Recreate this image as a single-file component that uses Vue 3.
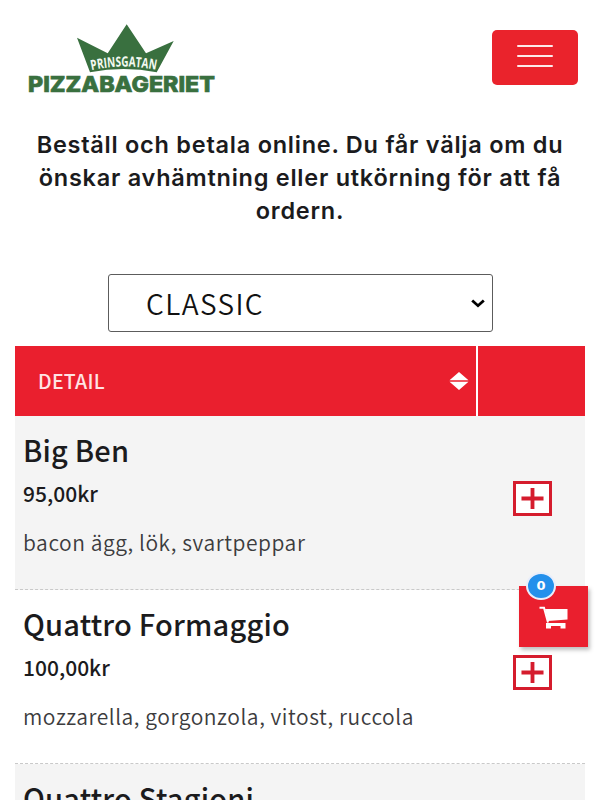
<template>
  <div class="page">
    <header class="header">
      <svg class="logo" viewBox="0 0 200 80" role="img" aria-label="Prinsgatan Pizzabageriet">
        <path
          class="logo-green"
          d="M57 17.7L87.7 33.3L106.7 4.3L126 33.3L153.7 21L136.7 52.3Q104 45.5 70 52.3Z"
        />
        <path id="arc" d="M71.5 50.3Q104 43 136.5 50" fill="none" />
        <text class="logo-street">
          <textPath href="#arc" textLength="65" lengthAdjust="spacingAndGlyphs">PRINSGATAN</textPath>
        </text>
        <text class="logo-name" x="8" y="71.7" textLength="187" lengthAdjust="spacingAndGlyphs">PIZZABAGERIET</text>
      </svg>
      <button class="menu-btn" aria-label="Meny">
        <span class="menu-line"></span>
        <span class="menu-line"></span>
        <span class="menu-line"></span>
      </button>
    </header>

    <h2 class="intro">
      <span class="intro-line">Beställ och betala online. Du får välja om du</span>
      <span class="intro-line">önskar avhämtning eller utkörning för att få</span>
      <span class="intro-line">ordern.</span>
    </h2>

    <button class="category">
      <span>{{ category }}</span>
      <svg class="chevron" viewBox="0 0 14 9">
        <path d="M1.2 1.5L7 6.7L12.8 1.5" fill="none" stroke="#000" stroke-width="2.8" />
      </svg>
    </button>

    <section class="menu">
      <div class="menu-head">
        <div class="head-detail">
          <span class="head-label">DETAIL</span>
          <svg class="sort" viewBox="0 0 20 18">
            <path d="M10 0L19.5 8.2H0.5ZM0.5 9.8H19.5L10 18Z" fill="#fff" />
          </svg>
        </div>
        <div class="head-action"></div>
      </div>

      <article v-for="pizza in pizzas" :key="pizza.name" class="row">
        <div class="row-text">
          <h3 class="name">{{ pizza.name }}</h3>
          <p class="price">{{ pizza.price }}</p>
          <p class="desc">{{ pizza.desc }}</p>
        </div>
        <button class="add-btn" aria-label="Lägg till" @click="count++">
          <svg viewBox="0 0 24 24">
            <path d="M12 1V23M0.5 12H23.5" stroke="#d51c2d" stroke-width="4" />
          </svg>
        </button>
      </article>
    </section>

    <button class="cart" aria-label="Varukorg">
      <span class="badge">{{ count }}</span>
      <svg class="cart-icon" viewBox="0 0 30 24">
        <path d="M0.5 1.8H5L9 16.5" fill="none" stroke="#fff" stroke-width="2" />
        <path d="M6 3H28.5V13.5L8.8 15Z" fill="#fff" />
        <path d="M7 17H26.5V22.5H21.5V20H12V22.5H7Z" fill="#fff" />
      </svg>
    </button>
  </div>
</template>

<script setup>
import { ref } from 'vue'

const category = ref('CLASSIC')
const count = ref(0)

const pizzas = [
  { name: 'Big Ben', price: '95,00kr', desc: 'bacon ägg, lök, svartpeppar' },
  { name: 'Quattro Formaggio', price: '100,00kr', desc: 'mozzarella, gorgonzola, vitost, ruccola' },
  { name: 'Quattro Stagioni', price: '', desc: '' }
]
</script>

<style>
body {
  margin: 0;
  background: #fff;
}
</style>

<style scoped>
.page {
  position: relative;
  width: 600px;
  height: 800px;
  overflow: hidden;
  background: #fff;
  color: #1b1b1d;
  font-family: "Noto Sans CJK JP", "Noto Sans", sans-serif;
}

button {
  border: none;
  padding: 0;
  margin: 0;
  font-family: inherit;
  cursor: pointer;
}

.header {
  display: flex;
  justify-content: space-between;
  align-items: flex-start;
  height: 108px;
  padding: 20px 22px 0 20px;
}

.logo {
  width: 200px;
  height: 80px;
}

.logo-green {
  fill: #39703f;
}

.logo-street {
  fill: #f4faf2;
  font: 700 14px "Open Sans", sans-serif;
}

.logo-name {
  fill: #39703f;
  stroke: #39703f;
  stroke-width: 0.7;
  font: 800 22px Inter, sans-serif;
}

.menu-btn {
  display: flex;
  flex-direction: column;
  align-items: center;
  gap: 8px;
  width: 86px;
  height: 55px;
  margin-top: 10px;
  padding-top: 15px;
  border-radius: 5px;
  background: #ea232c;
}

.menu-line {
  width: 36px;
  height: 2px;
  border-radius: 1px;
  background: #fdeaea;
}

.intro {
  margin: 0;
  height: 146px;
  text-align: center;
  font-family: Inter, sans-serif;
  font-size: 23.5px;
  font-weight: 600;
  line-height: 33px;
}

.intro-line {
  display: block;
  white-space: nowrap;
  letter-spacing: 0.75px;
}

.category {
  display: flex;
  justify-content: space-between;
  align-items: center;
  box-sizing: border-box;
  width: 385px;
  height: 58px;
  margin: 0 0 14px 108px;
  padding: 0 7px 0 37px;
  border: 1px solid #5c5c5c;
  border-radius: 3px;
  background: #fff;
  color: #111;
  font-size: 28px;
  font-weight: 350;
  line-height: 55px;
  letter-spacing: 1.4px;
}

.chevron {
  width: 14px;
  height: 9px;
}

.menu {
  width: 570px;
  margin-left: 15px;
}

.menu-head {
  display: flex;
  gap: 2px;
  height: 70px;
}

.head-detail {
  display: flex;
  justify-content: space-between;
  align-items: center;
  box-sizing: border-box;
  width: 461px;
  padding: 0 7px 0 23px;
  background: #ea1f2e;
  color: #ffe3e4;
  font-size: 19.5px;
  font-weight: 500;
  letter-spacing: 0.25px;
}

.head-label {
  margin-bottom: 1px;
}

.sort {
  width: 20px;
  height: 18px;
}

.head-action {
  flex: 1;
  background: #ea1f2e;
}

.row {
  display: flex;
  justify-content: space-between;
  box-sizing: border-box;
  height: 174px;
  padding: 0 33px 0 8px;
  border-bottom: 1px dashed #c9c9c9;
}

.row:nth-of-type(odd) {
  background: #f4f4f4;
}

.name {
  margin: 12px 0 0;
  font-size: 29px;
  font-weight: 500;
  line-height: 42px;
  letter-spacing: 0.2px;
}

.price {
  margin: 8px 0 0;
  font-size: 21px;
  font-weight: 500;
  line-height: 30px;
}

.desc {
  margin: 20px 0 0;
  color: #3c3c3e;
  font-size: 21px;
  font-weight: 350;
  line-height: 29px;
  letter-spacing: 0.55px;
}

.add-btn {
  display: flex;
  justify-content: center;
  align-items: center;
  box-sizing: border-box;
  width: 39px;
  height: 35px;
  margin-top: 65px;
  border: 3px solid #d51c2d;
  background: #fff;
}

.add-btn svg {
  width: 23px;
  height: 23px;
}

.cart {
  position: absolute;
  left: 519px;
  top: 586px;
  width: 69px;
  height: 61px;
  background: #ea1f2e;
  box-shadow: 2px 3px 4px rgba(0, 0, 0, 0.25);
}

.cart-icon {
  position: absolute;
  left: 20px;
  top: 20px;
  width: 30px;
  height: 24px;
}

.badge {
  position: absolute;
  left: 7px;
  top: -14px;
  box-sizing: border-box;
  width: 30px;
  height: 28px;
  border: 2px solid #e9eefb;
  border-radius: 50%;
  background: #2490eb;
  color: #fff;
  font: 700 13px/24px "DejaVu Sans", sans-serif;
  text-align: center;
}
</style>
